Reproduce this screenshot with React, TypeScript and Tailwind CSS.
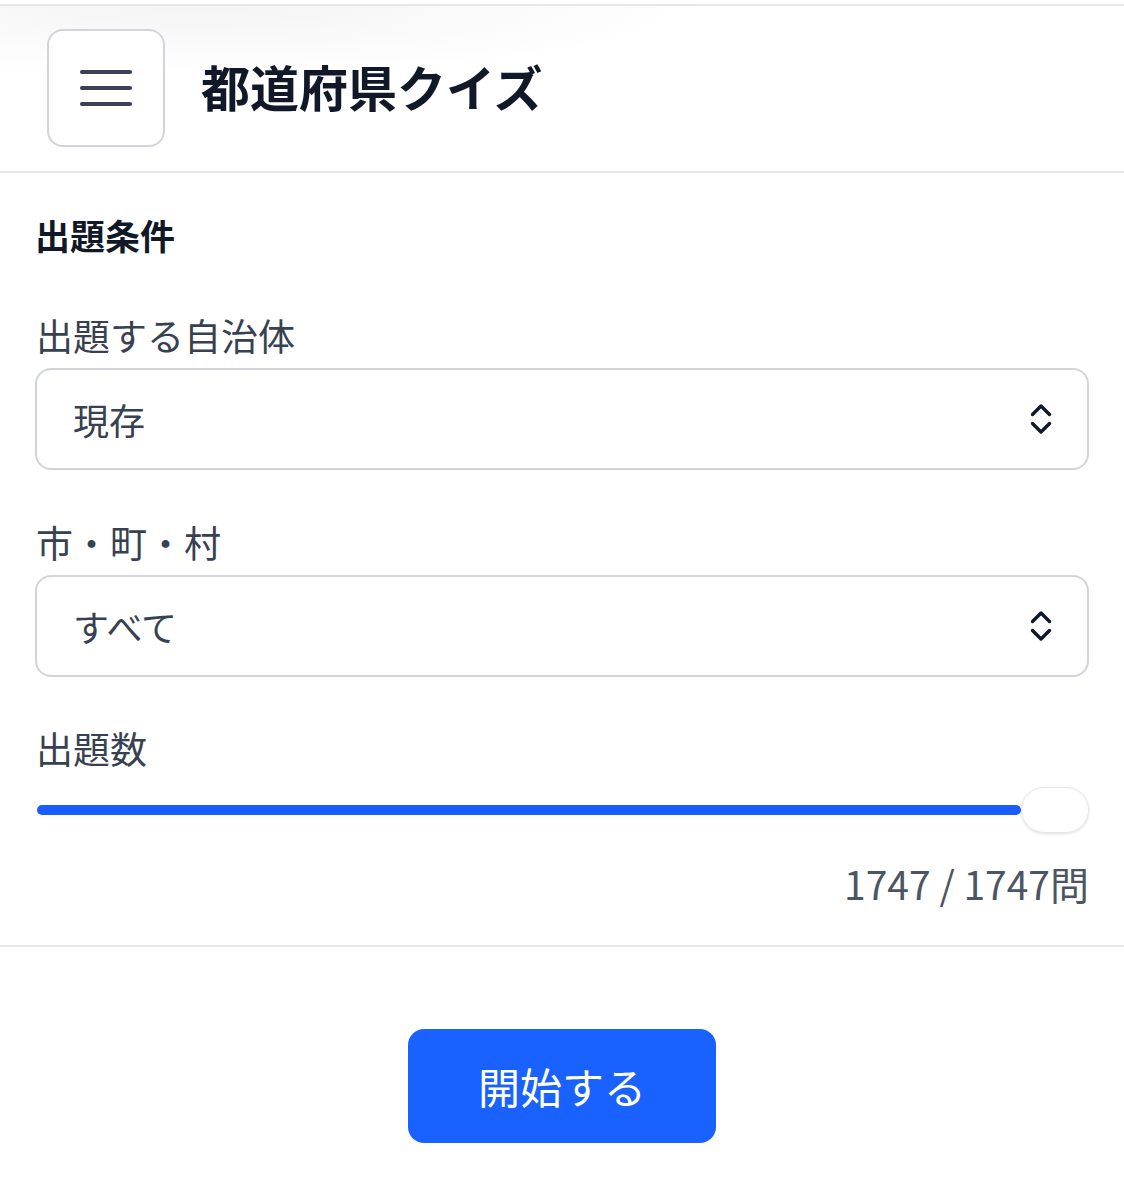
import React from "react";

const font = { fontFamily: '"Noto Sans CJK JP", "Noto Sans", sans-serif' };

function Chevrons() {
  return (
    <svg width="24" height="34" viewBox="0 0 24 34" fill="none" stroke="#111827" strokeWidth="3.4" strokeLinecap="round" strokeLinejoin="round">
      <path d="M3.5 12.5 L12 4 L20.5 12.5" />
      <path d="M3.5 21.5 L12 30 L20.5 21.5" />
    </svg>
  );
}

function Select({ value }: { value: string }) {
  return (
    <div className="flex h-[102px] items-center justify-between rounded-[16px] border-2 border-[#d1d5db] bg-white pl-[36px] pr-[34px]">
      <span className="text-[36px] leading-none text-[#374151]">{value}</span>
      <Chevrons />
    </div>
  );
}

export default function App() {
  return (
    <div className="min-h-[1200px] w-full bg-white" style={font}>
      <div className="h-[4px] bg-white" />
      <header className="flex items-center gap-[36px] border-y-2 border-[#e5e7eb] bg-[radial-gradient(ellipse_500px_70px_at_200px_0px,#f4f4f5,#ffffff)] px-[47px] pt-[23px] pb-[24px]">
        <button className="flex h-[118px] w-[118px] flex-col items-center justify-center gap-[12px] rounded-[16px] border-2 border-[#d1d5db] bg-white">
          <span className="block h-[4px] w-[52px] rounded-full bg-[#374151]" />
          <span className="block h-[4px] w-[52px] rounded-full bg-[#374151]" />
          <span className="block h-[4px] w-[52px] rounded-full bg-[#374151]" />
        </button>
        <h1 className="mb-[6px] text-[49px] font-bold leading-none text-[#111827]">都道府県クイズ</h1>
      </header>

      <section className="flex flex-col border-b-2 border-[#e5e7eb] px-[35px] pt-[36px] pb-[37px]">
        <div className="flex h-[50px] items-center text-[35px] font-bold leading-none text-[#111827]">出題条件</div>
        <div className="mt-[51px] flex h-[50px] items-center pl-[1px] text-[37px] leading-none text-[#374151]">出題する自治体</div>
        <div className="mt-[8px]">
          <Select value="現存" />
        </div>
        <div className="mt-[47px] flex h-[50px] items-center pl-[1px] text-[37px] leading-none text-[#374151]">市・町・村</div>
        <div className="mt-[8px]">
          <Select value="すべて" />
        </div>
        <div className="mt-[46px] flex h-[50px] items-center pl-[1px] text-[37px] leading-none text-[#374151]">出題数</div>
        <div className="relative mt-[14px] flex h-[46px] items-center">
          <div className="ml-[2px] h-[10px] flex-1 rounded-full bg-[#1a5dff]" />
          <div className="h-[46px] w-[68px] rounded-full border border-[#e5e7eb] bg-white shadow-[0_1px_3px_rgba(0,0,0,0.12)]" />
        </div>
        <div className="mt-[25px] flex h-[50px] items-center justify-end text-[39px] leading-none text-[#4b5563]">1747 / 1747問</div>
      </section>

      <div className="flex justify-center pt-[82px]">
        <button className="flex h-[114px] w-[308px] items-center justify-center rounded-[16px] bg-[#1a62ff] text-[42px] leading-none text-white">
          開始する
        </button>
      </div>
    </div>
  );
}
